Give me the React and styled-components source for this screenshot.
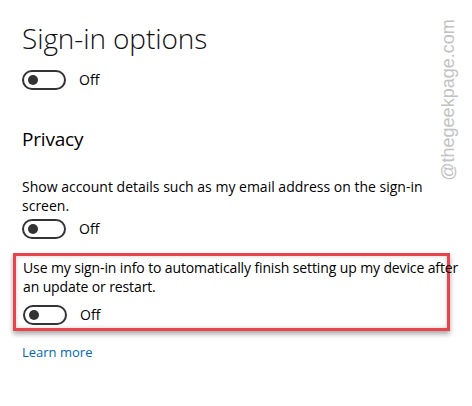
import styled, { createGlobalStyle } from "styled-components";

const GlobalStyle = createGlobalStyle`
  html, body {
    margin: 0;
    padding: 0;
    background: #ffffff;
  }
  body {
    font-family: "Open Sans", "Noto Sans", sans-serif;
    color: #000000;
  }
`;

const Page = styled.div`
  position: relative;
  width: 472px;
  height: 406px;
  overflow: hidden;
  background: #ffffff;
  padding: 0 0 0 22px;
  box-sizing: border-box;
`;

const Title = styled.h1`
  margin: 0;
  padding-top: 19px;
  font-size: 28px;
  font-weight: 300;
  line-height: 38px;
  letter-spacing: -0.1px;
  color: #111111;
`;

const SectionTitle = styled.h2`
  margin: 35px 0 0 0;
  font-size: 19px;
  font-weight: 400;
  line-height: 28px;
  letter-spacing: -0.2px;
`;

const Description = styled.p`
  margin: ${(p) => p.$top || 0}px 0 0 0;
  font-size: 14px;
  line-height: 19px;
  width: ${(p) => p.$width || 420}px;
  letter-spacing: ${(p) => p.$tight ? "-0.12px" : "0"};
`;

const ToggleRow = styled.div`
  display: flex;
  align-items: center;
  gap: 13px;
  margin-top: ${(p) => p.$top || 0}px;
  height: 20px;
`;

const Switch = styled.div`
  width: 44px;
  height: 20px;
  box-sizing: border-box;
  border: 2px solid #333333;
  border-radius: 10px;
  display: flex;
  align-items: center;
  padding-left: 4px;

  &::before {
    content: "";
    width: 10px;
    height: 10px;
    border-radius: 50%;
    background: #333333;
  }
`;

const ToggleLabel = styled.span`
  font-size: 14px;
  line-height: 20px;
`;

const Highlight = styled.div`
  margin: 14px 0 0 -9px;
  width: 437px;
  box-sizing: border-box;
  border: 3px solid #e8444c;
  padding: 2px 0 3px 7px;
  box-shadow: 0 3px 5px rgba(0, 0, 0, 0.35), inset 0 0 4px rgba(0, 0, 0, 0.2);
`;

const LearnMore = styled.a`
  display: block;
  margin-top: 11px;
  font-size: 13px;
  line-height: 20px;
  color: #0067b8;
  text-decoration: none;
`;

const Watermark = styled.div`
  position: absolute;
  left: 448px;
  top: 100px;
  transform: translate(-50%, -50%) rotate(-90deg);
  font-family: "Liberation Sans", Arial, sans-serif;
  font-size: 18px;
  color: #c2c2c2;
  white-space: nowrap;
`;

function Toggle({ top }) {
  return (
    <ToggleRow $top={top}>
      <Switch />
      <ToggleLabel>Off</ToggleLabel>
    </ToggleRow>
  );
}

export default function App() {
  return (
    <>
      <GlobalStyle />
      <Page>
        <Title>Sign-in options</Title>
        <Toggle top={13} />
        <SectionTitle>Privacy</SectionTitle>
        <Description $top={24}>
          Show account details such as my email address on the sign-in
          screen.
        </Description>
        <Toggle top={4} />
        <Highlight>
          <Description $width={440} $tight>
            Use my sign-in info to automatically finish setting up my device
            after an update or restart.
          </Description>
          <Toggle top={9} />
        </Highlight>
        <LearnMore href="#">Learn more</LearnMore>
        <Watermark>@thegeekpage.com</Watermark>
      </Page>
    </>
  );
}
